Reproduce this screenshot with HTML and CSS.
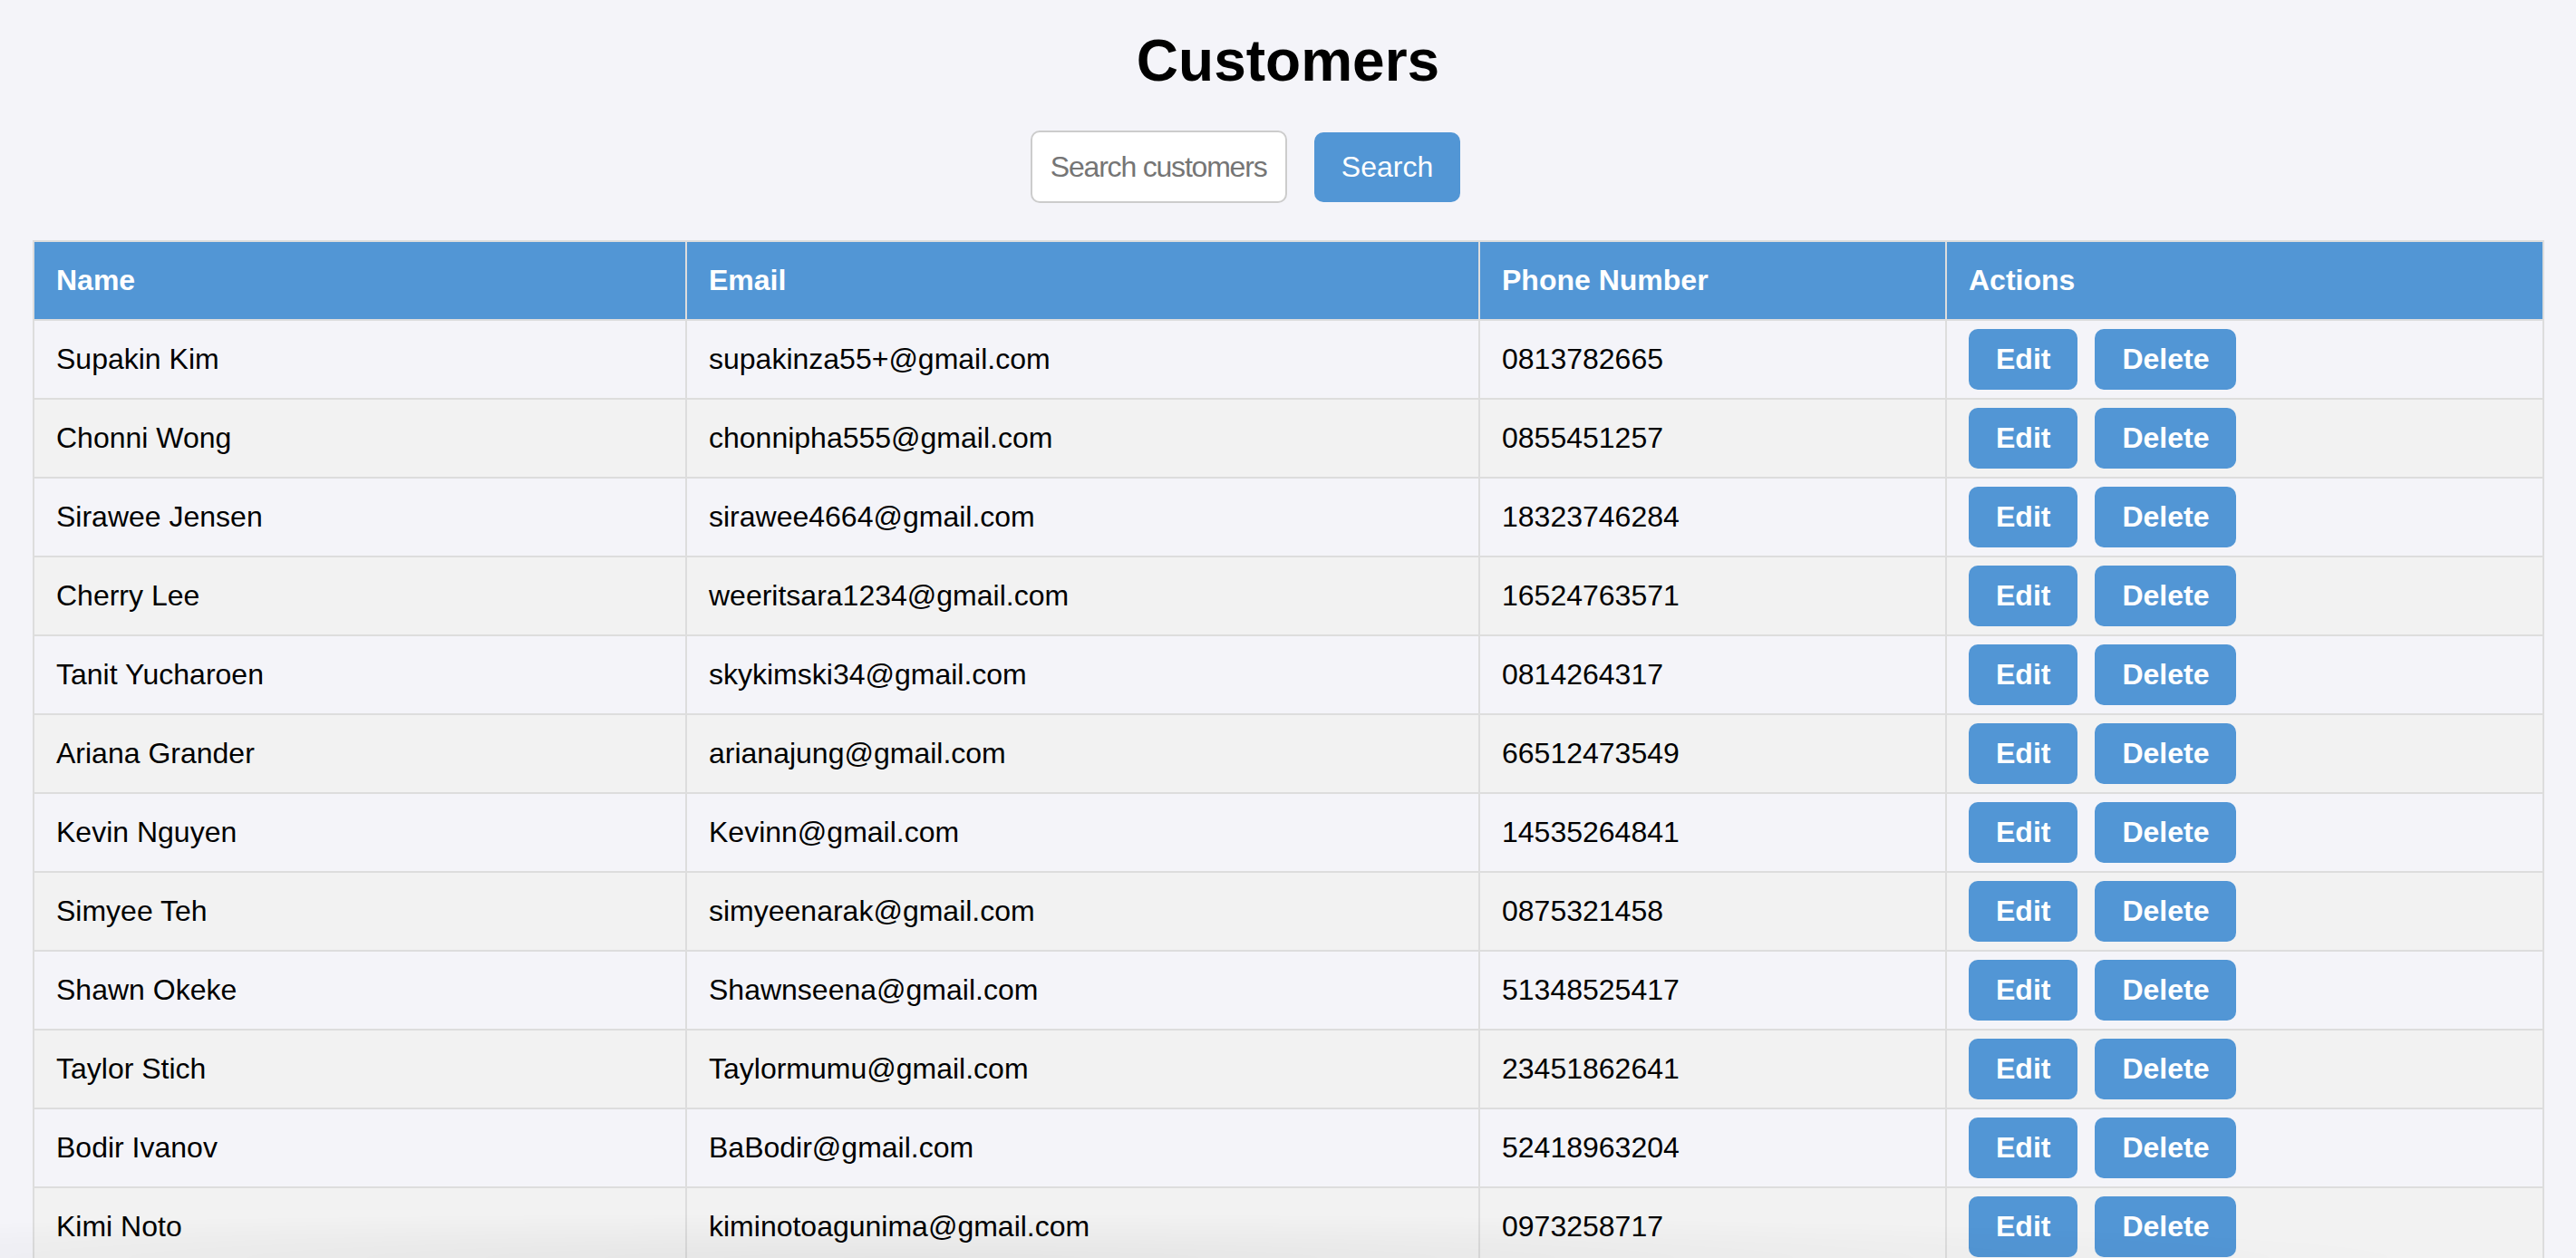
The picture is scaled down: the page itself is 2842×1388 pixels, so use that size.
FILE: index.html
```html
<!DOCTYPE html>
<html lang="en">
<head>
<meta charset="utf-8">
<title>Customers</title>
<link rel="stylesheet" href="styles.css">
</head>
<body>
<div class="page">
  <h1 class="title">Customers</h1>
  <form class="search">
    <input class="search-input" type="text" placeholder="Search customers">
    <button class="btn search-btn" type="button">Search</button>
  </form>
  <table class="customers">
    <colgroup>
      <col class="c-name"><col class="c-email"><col class="c-phone"><col class="c-actions">
    </colgroup>
    <thead>
      <tr><th>Name</th><th>Email</th><th>Phone Number</th><th>Actions</th></tr>
    </thead>
    <tbody>
      <tr><td>Supakin Kim</td><td>supakinza55+@gmail.com</td><td>0813782665</td><td class="actions"><div class="btns"><button class="btn">Edit</button><button class="btn">Delete</button></div></td></tr>
      <tr><td>Chonni Wong</td><td>chonnipha555@gmail.com</td><td>0855451257</td><td class="actions"><div class="btns"><button class="btn">Edit</button><button class="btn">Delete</button></div></td></tr>
      <tr><td>Sirawee Jensen</td><td>sirawee4664@gmail.com</td><td>18323746284</td><td class="actions"><div class="btns"><button class="btn">Edit</button><button class="btn">Delete</button></div></td></tr>
      <tr><td>Cherry Lee</td><td>weeritsara1234@gmail.com</td><td>16524763571</td><td class="actions"><div class="btns"><button class="btn">Edit</button><button class="btn">Delete</button></div></td></tr>
      <tr><td>Tanit Yucharoen</td><td>skykimski34@gmail.com</td><td>0814264317</td><td class="actions"><div class="btns"><button class="btn">Edit</button><button class="btn">Delete</button></div></td></tr>
      <tr><td>Ariana Grander</td><td>arianajung@gmail.com</td><td>66512473549</td><td class="actions"><div class="btns"><button class="btn">Edit</button><button class="btn">Delete</button></div></td></tr>
      <tr><td>Kevin Nguyen</td><td>Kevinn@gmail.com</td><td>14535264841</td><td class="actions"><div class="btns"><button class="btn">Edit</button><button class="btn">Delete</button></div></td></tr>
      <tr><td>Simyee Teh</td><td>simyeenarak@gmail.com</td><td>0875321458</td><td class="actions"><div class="btns"><button class="btn">Edit</button><button class="btn">Delete</button></div></td></tr>
      <tr><td>Shawn Okeke</td><td>Shawnseena@gmail.com</td><td>51348525417</td><td class="actions"><div class="btns"><button class="btn">Edit</button><button class="btn">Delete</button></div></td></tr>
      <tr><td>Taylor Stich</td><td>Taylormumu@gmail.com</td><td>23451862641</td><td class="actions"><div class="btns"><button class="btn">Edit</button><button class="btn">Delete</button></div></td></tr>
      <tr><td>Bodir Ivanov</td><td>BaBodir@gmail.com</td><td>52418963204</td><td class="actions"><div class="btns"><button class="btn">Edit</button><button class="btn">Delete</button></div></td></tr>
      <tr><td>Kimi Noto</td><td>kiminotoagunima@gmail.com</td><td>0973258717</td><td class="actions"><div class="btns"><button class="btn">Edit</button><button class="btn">Delete</button></div></td></tr>
    </tbody>
  </table>
</div>
<div class="bottom-shade"></div>
</body>
</html>
```

FILE: styles.css
```css
html, body {
  margin: 0;
  padding: 0;
  background: #f4f4f9;
  font-family: "Liberation Sans", Arial, Helvetica, sans-serif;
  color: #000;
}

.page {
  padding: 31px 36px 0 36px;
}

.title {
  margin: 0;
  font-size: 64px;
  font-weight: bold;
  line-height: 73px;
  text-align: center;
}

.search {
  display: flex;
  justify-content: center;
  align-items: center;
  gap: 30px;
  margin: 40px 0 41px 0;
  padding-right: 94px;
}

.search-input {
  box-sizing: border-box;
  width: 283px;
  height: 80px;
  padding: 0 20px;
  border: 2px solid #cccccc;
  border-radius: 10px;
  background: #ffffff;
  font-family: "Liberation Sans", Arial, Helvetica, sans-serif;
  font-size: 32px;
  letter-spacing: -1.2px;
  color: #000;
  outline: none;
}

.search-input::placeholder {
  color: #757575;
}

.btn {
  box-sizing: border-box;
  border: none;
  background: #5296d5;
  color: #ffffff;
  font-family: "Liberation Sans", Arial, Helvetica, sans-serif;
  cursor: pointer;
}

.search-btn {
  height: 77px;
  padding: 0 30px;
  border-radius: 10px;
  font-size: 32px;
  font-weight: normal;
}

.customers {
  width: 100%;
  border-collapse: collapse;
  table-layout: fixed;
  font-size: 32px;
}

.c-name { width: 720px; }
.c-email { width: 875px; }
.c-phone { width: 515px; }
.c-actions { width: 659px; }

.customers th,
.customers td {
  border: 2px solid #dddddd;
  padding: 24px;
  text-align: left;
  line-height: 37px;
  white-space: nowrap;
}

.customers th {
  background: #5296d5;
  color: #ffffff;
  font-weight: bold;
}

.customers tbody tr:nth-child(even) {
  background: #f2f2f2;
}

.customers td.actions {
  padding: 9px 24px;
}

.btns {
  display: flex;
  gap: 19px;
}

.btns .btn {
  height: 67px;
  padding: 0 30px;
  border-radius: 10px;
  font-size: 32px;
  font-weight: bold;
  line-height: 67px;
}

.bottom-shade {
  position: fixed;
  left: 0;
  right: 0;
  bottom: 0;
  height: 50px;
  pointer-events: none;
  background: radial-gradient(ellipse 60% 100% at 35% 100%, rgba(0, 0, 0, 0.05), rgba(0, 0, 0, 0));
}
```
